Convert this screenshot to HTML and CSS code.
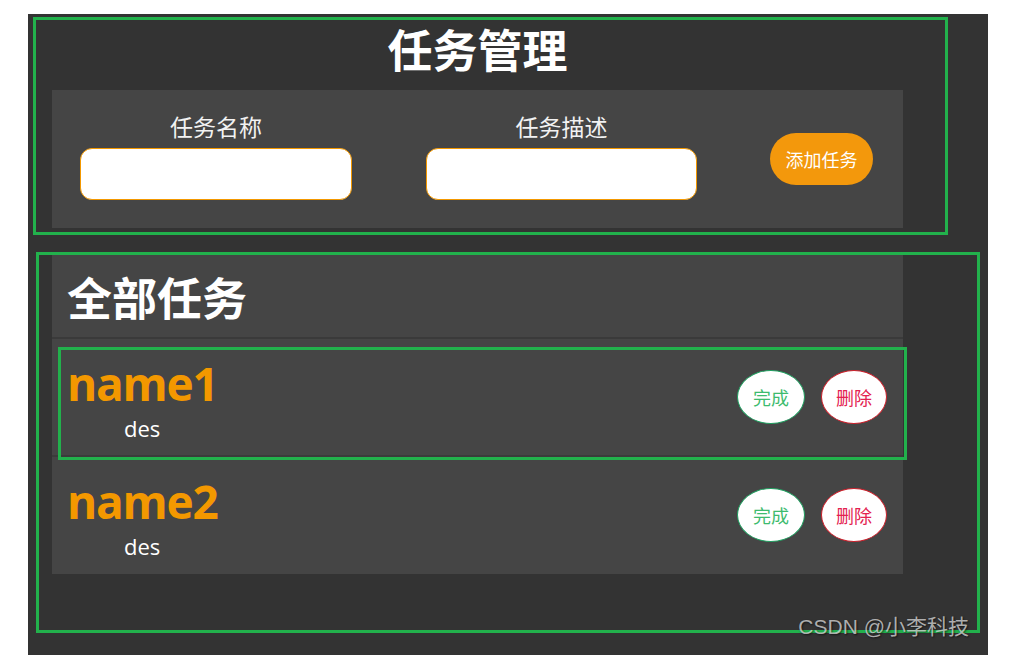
FILE: index.html
```html
<!DOCTYPE html>
<html lang="zh-CN">
<head>
<meta charset="utf-8">
<title>任务管理</title>
<link rel="stylesheet" href="styles.css">
</head>
<body>
<div class="screen">
  <section class="top">
    <div class="top-inner">
      <h1 class="title">任务管理</h1>
      <div class="form">
        <div class="field field-name">
          <label class="label">任务名称</label>
          <input class="input" type="text">
        </div>
        <div class="field field-desc">
          <label class="label">任务描述</label>
          <input class="input" type="text">
        </div>
        <button class="add-btn">添加任务</button>
      </div>
    </div>
  </section>
  <section class="bottom">
    <div class="list">
      <h2 class="list-title">全部任务</h2>
      <div class="row row-marked">
        <div class="info">
          <div class="name">name1</div>
          <div class="des">des</div>
        </div>
        <div class="actions">
          <button class="btn btn-done">完成</button>
          <button class="btn btn-del">删除</button>
        </div>
      </div>
      <div class="row row-last">
        <div class="info">
          <div class="name">name2</div>
          <div class="des">des</div>
        </div>
        <div class="actions">
          <button class="btn btn-done">完成</button>
          <button class="btn btn-del">删除</button>
        </div>
      </div>
    </div>
  </section>
  <div class="watermark">CSDN @小李科技</div>
</div>
</body>
</html>
```

FILE: styles.css
```css
* { box-sizing: border-box; }

body {
  margin: 0;
  background: #ffffff;
  font-family: "Noto Sans", "Noto Sans CJK SC", sans-serif;
}

.screen {
  position: relative;
  margin: 14px 0 0 28px;
  width: 960px;
  height: 641px;
  background: #333333;
  padding: 3px 0 0 5px;
  overflow: hidden;
}

.top {
  width: 915px;
  height: 218px;
  border: 3px solid #22b14c;
}

.top-inner {
  margin-left: 16px;
  width: 851px;
}

.title {
  margin: 0 0 13px;
  height: 57px;
  line-height: 57px;
  font-family: "Noto Sans CJK SC", sans-serif;
  font-size: 45px;
  font-weight: 700;
  color: #ffffff;
  text-align: center;
}

.form {
  display: flex;
  align-items: flex-start;
  height: 138px;
  padding: 21px 0 0 28px;
  background: #454545;
}

.field {
  display: flex;
  flex-direction: column;
  align-items: center;
}

.field-name { width: 272px; }
.field-desc { width: 271px; margin-left: 74px; }

.label {
  height: 30px;
  line-height: 30px;
  margin-bottom: 7px;
  font-family: "Noto Sans CJK SC", sans-serif;
  font-size: 23px;
  color: #f2f2f2;
}

.input {
  width: 100%;
  height: 52px;
  background: #ffffff;
  border: 1px solid #f39800;
  border-radius: 12px;
  outline: none;
}

.add-btn {
  margin: 22px 0 0 73px;
  width: 103px;
  height: 52px;
  border: none;
  border-radius: 26px;
  background: #f3980c;
  color: #ffffff;
  font-family: "Noto Sans CJK SC", sans-serif;
  font-size: 18px;
  padding: 0;
}

.bottom {
  margin: 17px 0 0 3px;
  width: 944px;
  height: 381px;
  border: 3px solid #22b14c;
}

.list {
  margin-left: 13px;
  width: 851px;
  height: 319px;
  background: #454545;
}

.list-title {
  margin: 0;
  height: 84px;
  padding: 5px 0 0 15px;
  line-height: 74px;
  font-family: "Noto Sans CJK SC", sans-serif;
  font-size: 45px;
  font-weight: 700;
  color: #ffffff;
  border-bottom: 2px solid #3a3a3a;
}

.row {
  position: relative;
  display: flex;
  align-items: center;
  justify-content: space-between;
  height: 118px;
  padding: 0 16px 0 15px;
  border-bottom: 2px solid #3b3b3b;
}

.row-last {
  height: 115px;
  border-bottom: none;
}

.row-marked::after {
  content: "";
  position: absolute;
  left: 6px;
  right: -4px;
  top: 8px;
  bottom: -5px;
  border: 3px solid #22b14c;
  pointer-events: none;
}

.info {
  display: flex;
  flex-direction: column;
  padding-top: 4px;
}

.name {
  font-family: "Open Sans", sans-serif;
  font-weight: 700;
  font-size: 46px;
  letter-spacing: -1.2px;
  line-height: 52px;
  color: #f39800;
}

.des {
  margin-top: 6px;
  padding-left: 57px;
  font-family: "Open Sans", sans-serif;
  font-size: 22px;
  line-height: 26px;
  color: #ffffff;
}

.actions {
  display: flex;
  gap: 16px;
}

.btn {
  height: 54px;
  padding: 0;
  border-radius: 50%;
  background: #ffffff;
  font-family: "Noto Sans CJK SC", sans-serif;
  font-size: 18px;
}

.btn-done {
  width: 68px;
  border: 1.5px solid #1f9e5f;
  color: #3dbb6e;
}

.btn-del {
  width: 66px;
  border: 1.5px solid #cc1f2a;
  color: #e3214f;
}

.watermark {
  position: absolute;
  right: 19px;
  bottom: 15px;
  font-family: "Liberation Sans", "Noto Sans CJK SC", sans-serif;
  font-size: 21px;
  line-height: 26px;
  color: rgba(220, 220, 220, 0.75);
  text-shadow: 1px 1px 2px rgba(0, 0, 0, 0.6);
}
```
